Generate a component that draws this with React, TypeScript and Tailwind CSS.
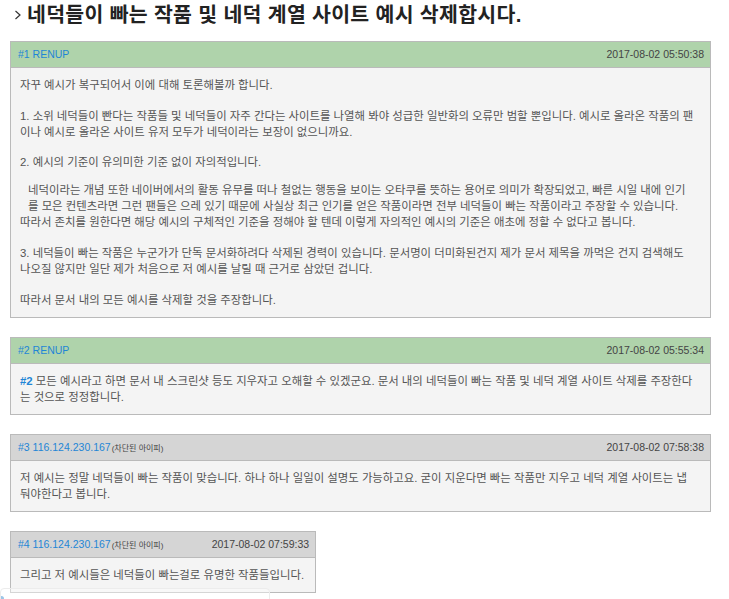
import type { ReactNode } from "react";

const FONT = { fontFamily: '"Liberation Sans", "Noto Sans CJK KR", sans-serif' };

type PostProps = {
  num: number;
  author: string;
  blocked?: boolean;
  date: string;
  green?: boolean;
  fit?: boolean;
  children: ReactNode;
};

function Post({ num, author, blocked, date, green, fit, children }: PostProps) {
  return (
    <div className={"border border-[#bababa] mb-[19px] " + (fit ? "w-fit" : "w-full")}>
      <div
        className={
          "flex items-center justify-between gap-4 h-[26px] pl-[7px] pr-[6px] border-b border-[#bababa] " +
          (green ? "bg-[#afd3ab]" : "bg-[#d5d5d5]")
        }
      >
        <div className="flex items-baseline whitespace-nowrap">
          <span className="text-[10.5px] text-[#1f86d6]">
            #{num} {author}
          </span>
          {blocked && <span className="text-[8px] text-[#444] ml-[1px]">(차단된 아이피)</span>}
        </div>
        <span className="text-[10.5px] text-[#444] whitespace-nowrap">{date}</span>
      </div>
      <div className="bg-[#f4f4f4] pl-[9px] pr-[7px] py-[9px] text-[11.4px] leading-[16px] text-[#555]">
        {children}
      </div>
    </div>
  );
}

export default function App() {
  return (
    <div className="relative min-h-[599px] bg-white" style={FONT}>
      <div className="w-[701px] ml-[10px]">
        {/* Title */}
        <div className="flex items-center h-[30px] gap-[5px]">
          <svg width="8" height="10" viewBox="0 0 8 10" className="ml-[4px] shrink-0">
            <polyline points="1.5,1 6,5 1.5,9" fill="none" stroke="#333" strokeWidth="1.2" />
          </svg>
          <h1 className="text-[20.5px] tracking-[0.3px] font-bold text-[#222] leading-none">
            네덕들이 빠는 작품 및 네덕 계열 사이트 예시 삭제합시다.
          </h1>
        </div>

        <div className="mt-[11px]">
          <Post num={1} author="RENUP" date="2017-08-02 05:50:38" green>
            <p className="mb-[15px]">자꾸 예시가 복구되어서 이에 대해 토론해볼까 합니다.</p>
            <p className="mb-[14px]">
              1. 소위 네덕들이 빤다는 작품들 및 네덕들이 자주 간다는 사이트를 나열해 봐야 성급한 일반화의 오류만 범할
              뿐입니다. 예시로 올라온 작품의 팬<br />
              이나 예시로 올라온 사이트 유저 모두가 네덕이라는 보장이 없으니까요.
            </p>
            <p className="mb-[12px]">2. 예시의 기준이 유의미한 기준 없이 자의적입니다.</p>
            <p className="pl-[8px]">
              네덕이라는 개념 또한 네이버에서의 활동 유무를 떠나 철없는 행동을 보이는 오타쿠를 뜻하는 용어로 의미가
              확장되었고, 빠른 시일 내에 인기<br />
              를 모은 컨텐츠라면 그런 팬들은 으레 있기 때문에 사실상 최근 인기를 얻은 작품이라면 전부 네덕들이 빠는
              작품이라고 주장할 수 있습니다.
            </p>
            <p className="mb-[15px]">
              따라서 존치를 원한다면 해당 예시의 구체적인 기준을 정해야 할 텐데 이렇게 자의적인 예시의 기준은 애초에 정할
              수 없다고 봅니다.
            </p>
            <p className="mb-[15px]">
              3. 네덕들이 빠는 작품은 누군가가 단독 문서화하려다 삭제된 경력이 있습니다. 문서명이 더미화된건지 제가 문서
              제목을 까먹은 건지 검색해도<br />
              나오질 않지만 일단 제가 처음으로 저 예시를 날릴 때 근거로 삼았던 겁니다.
            </p>
            <p>따라서 문서 내의 모든 예시를 삭제할 것을 주장합니다.</p>
          </Post>

          <Post num={2} author="RENUP" date="2017-08-02 05:55:34" green>
            <p>
              <span className="font-bold text-[#1f86d6]">#2</span> 모든 예시라고 하면 문서 내 스크린샷 등도 지우자고
              오해할 수 있겠군요. 문서 내의 네덕들이 빠는 작품 및 네덕 계열 사이트 삭제를 주장한다<br />
              는 것으로 정정합니다.
            </p>
          </Post>

          <Post num={3} author="116.124.230.167" blocked date="2017-08-02 07:58:38">
            <p>
              저 예시는 정말 네덕들이 빠는 작품이 맞습니다. 하나 하나 일일이 설명도 가능하고요. 굳이 지운다면 빠는
              작품만 지우고 네덕 계열 사이트는 냅<br />
              둬야한다고 봅니다.
            </p>
          </Post>

          <Post num={4} author="116.124.230.167" blocked date="2017-08-02 07:59:33" fit>
            <p className="pr-[4px]">그리고 저 예시들은 네덕들이 빠는걸로 유명한 작품들입니다.</p>
          </Post>
        </div>
      </div>

      {/* faint popup peeking at the bottom edge */}
      <div className="absolute left-0 top-[588px] w-[270px] h-[20px] bg-white/40 border border-[#ececec] rounded-sm">
        <span className="absolute left-0 top-[7px] w-[3px] h-[5px] bg-[#9cc6e8] rounded-r" />
      </div>
    </div>
  );
}
